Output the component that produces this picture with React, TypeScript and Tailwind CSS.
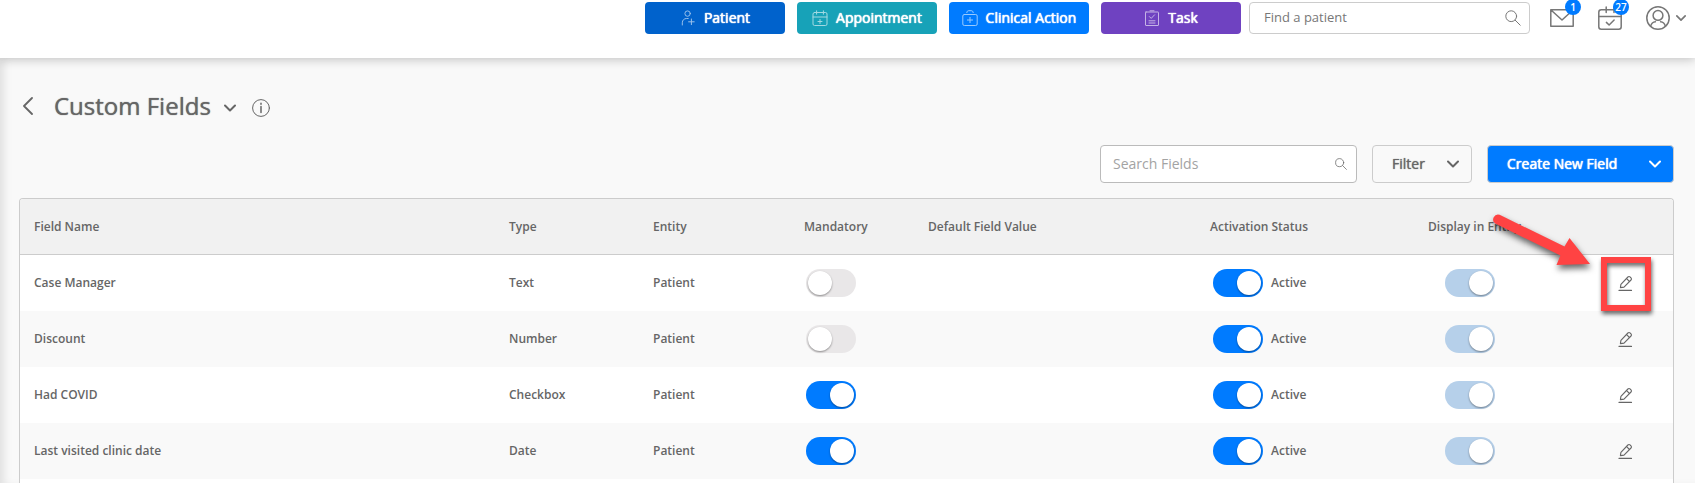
import { useState } from "react";
import type { ReactNode } from "react";

type Field = {
  name: string;
  type: string;
  entity: string;
  mandatory: boolean;
};

const fields: Field[] = [
  { name: "Case Manager", type: "Text", entity: "Patient", mandatory: false },
  { name: "Discount", type: "Number", entity: "Patient", mandatory: false },
  { name: "Had COVID", type: "Checkbox", entity: "Patient", mandatory: true },
  {
    name: "Last visited clinic date",
    type: "Date",
    entity: "Patient",
    mandatory: true,
  },
];

type IconProps = {
  size?: number;
  stroke?: number;
  className?: string;
  box?: number;
  children?: ReactNode;
};

const Icon = ({
  size = 16,
  stroke = 1,
  box = 16,
  className = "",
  children,
}: IconProps) => (
  <svg
    width={size}
    height={size}
    viewBox={`0 0 ${box} ${box}`}
    fill="none"
    stroke="currentColor"
    strokeWidth={stroke}
    strokeLinecap="round"
    strokeLinejoin="round"
    aria-hidden="true"
    className={`shrink-0 ${className}`}
  >
    {children}
  </svg>
);

const ChevronDown = ({ stroke = 2, size = 12 }: IconProps) => (
  <Icon size={size} box={12} stroke={stroke}>
    <path d="M1 3.5l5 5 5-5" />
  </Icon>
);

const SearchIcon = ({ size = 16, stroke = 1 }: IconProps) => (
  <Icon size={size} stroke={stroke}>
    <circle cx="6.2" cy="6.2" r="5.4" />
    <path d="M10.2 10.2l5 5" />
  </Icon>
);

const PencilIcon = () => (
  <Icon size={16} stroke={1.1}>
    <path d="M2.4 12.6l.5-3.2 7-7.4a1.5 1.5 0 0 1 2.2 0l.9.9a1.5 1.5 0 0 1 0 2.1l-7 7.1-3.6.5z" />
    <path d="M8.6 3.6l2.9 2.9" />
    <path d="M1 15.4h12.5" />
  </Icon>
);

const actions = [
  {
    label: "Patient",
    color: "bg-[#0062cc]",
    icon: (
      <>
        <circle cx="7.6" cy="3.6" r="2.7" />
        <path d="M2.3 15v-2.2c0-2.6 1.8-4.3 4.3-4.3h1.6M11.4 9v5.6M8.6 11.8h5.6" />
      </>
    ),
  },
  {
    label: "Appointment",
    color: "bg-[#17a2b8]",
    icon: (
      <>
        <rect x="1" y="2.5" width="14" height="13" rx="1.5" />
        <path d="M1 7h14M4.6.8v3.4M11.4.8v3.4M8 9.5v4M6 11.5h4" />
      </>
    ),
  },
  {
    label: "Clinical Action",
    color: "bg-[#007bff]",
    icon: (
      <>
        <rect x=".8" y="4.5" width="14.4" height="11" rx="1.5" />
        <path d="M4.8 2.6c0-1.2.8-1.9 2-1.9h2.4c1.2 0 2 .7 2 1.9M8 7.4v5.2M5.4 10h5.2" />
      </>
    ),
  },
  {
    label: "Task",
    color: "bg-[#6f42c1]",
    icon: (
      <>
        <rect x="1.5" y="2" width="13" height="13.5" rx=".5" />
        <path d="M6 .8h4M5.4 6.6l1.8 1.8 3.4-3.6M5 10.8h6M5 13h6" />
      </>
    ),
  },
];

const Badge = ({ children }: { children: ReactNode }) => (
  <span className="absolute -top-[7px] left-[15px] flex h-4 w-4 items-center justify-center rounded-full bg-[#007bff] text-[10px] font-semibold text-white">
    {children}
  </span>
);

const TopBar = () => (
  <header className="relative z-10 flex h-[58px] items-start justify-end bg-white pt-0.5 pr-[9px] shadow-[0_2px_10px_rgba(0,0,0,0.2)]">
    <div className="flex gap-3">
      {actions.map((a) => (
        <button
          key={a.label}
          type="button"
          className={`flex h-8 w-[140px] items-center justify-center gap-2 rounded text-sm text-white text-shadow-[0_0_1px_currentColor,0_0_1px_currentColor] ${a.color}`}
        >
          <Icon className="opacity-60">{a.icon}</Icon>
          {a.label}
        </button>
      ))}
    </div>
    <label className="ml-2 flex h-8 w-[281px] items-center rounded border border-[#ccc] pr-2 pl-3.5 text-[#777]">
      <input
        type="text"
        aria-label="Find a patient"
        placeholder="Find a patient"
        className="min-w-0 flex-1 text-[13px] outline-none placeholder:text-[#777]"
      />
      <SearchIcon />
    </label>
    <button
      type="button"
      aria-label="Messages"
      className="relative mt-1 ml-5 text-[#777]"
    >
      <Icon size={24} box={24} stroke={1.5}>
        <path d="M.8 3.8h22.4v16.4H.8zM1 4l11 10L23 4" />
      </Icon>
      <Badge>1</Badge>
    </button>
    <button
      type="button"
      aria-label="Calendar"
      className="relative mt-1 ml-6 text-[#777]"
    >
      <Icon size={24} box={24} stroke={1.5}>
        <rect x=".8" y="3.8" width="22.4" height="19.4" rx="2.5" />
        <path d="M1 10.5h22M8.2 1v5.4M16 1v5.4M8.4 16.4l2.7 2.6 5-5" />
      </Icon>
      <Badge>27</Badge>
    </button>
    <button
      type="button"
      aria-label="Account"
      className="mt-1 ml-6 flex items-center gap-1.5 text-[#777]"
    >
      <Icon size={24} box={24} stroke={1.5}>
        <circle cx="12" cy="12" r="11.2" />
        <circle cx="12" cy="9.4" r="4.9" />
        <path d="M4.6 20.2c.8-2.8 2.8-4.2 4.8-4.4M19.4 20.2c-.8-2.8-2.8-4.2-4.8-4.4" />
      </Icon>
      <ChevronDown stroke={2} size={10} />
    </button>
  </header>
);

type ToggleProps = {
  label: string;
  initial: boolean;
  disabled?: boolean;
};

const Toggle = ({ label, initial, disabled }: ToggleProps) => {
  const [on, setOn] = useState(initial);
  return (
    <input
      type="checkbox"
      role="switch"
      aria-label={label}
      checked={on}
      disabled={disabled}
      onChange={() => setOn(!on)}
      className="block h-7 w-[50px] shrink-0 appearance-none rounded-full bg-[#e9e7e8] p-0.5 before:block before:h-6 before:w-6 before:rounded-full before:bg-white before:shadow-[0_1px_2px_rgba(0,0,0,0.4)] checked:bg-[#007bff] checked:before:translate-x-[22px] disabled:checked:bg-[#b6d0ea]"
    />
  );
};

// red frame and arrow pointing at the edit button
const Callout = () => (
  <>
    <span className="pointer-events-none absolute top-0.5 left-[23px] h-[54px] w-[50px] border-6 border-[#ff4343] drop-shadow-[1px_3px_2px_rgba(0,0,0,0.6)]" />
    <svg
      width="120"
      height="80"
      viewBox="0 0 120 80"
      aria-hidden="true"
      className="pointer-events-none absolute -top-[50px] -left-[93px] drop-shadow-[1px_4px_3px_rgba(0,0,0,0.6)]"
    >
      <path
        d="M14.6 9.8 L79.5 41.6 L84.5 33 L105 59 L71.5 60 L75.4 50.6 L10.2 18.6 A5 5 0 0 1 14.6 9.8Z"
        fill="#ff4343"
      />
    </svg>
  </>
);

const FieldsTable = () => (
  <div className="mt-[15px] flex-1 overflow-hidden rounded-t border border-b-0 border-[#ccc] bg-white">
    <table className="w-full table-fixed border-separate border-spacing-0 text-left text-xs font-semibold">
      <colgroup>
        <col />
        <col className="w-36" />
        <col className="w-[151px]" />
        <col className="w-[124px]" />
        <col className="w-[282px]" />
        <col className="w-[218px]" />
        <col className="w-[164px]" />
        <col className="w-[95px]" />
      </colgroup>
      <thead>
        <tr className="bg-[#f1f1f1] [&>th]:h-14 [&>th]:border-b [&>th]:border-[#ccc] [&>th]:px-3.5 [&>th]:font-semibold">
          <th>Field Name</th>
          <th>Type</th>
          <th>Entity</th>
          <th>Mandatory</th>
          <th>Default Field Value</th>
          <th>Activation Status</th>
          <th>Display in Entity</th>
          <th aria-label="Edit" />
        </tr>
      </thead>
      <tbody>
        {fields.map((f, i) => (
          <tr
            key={f.name}
            className="even:bg-[#f9f9f9] [&>td]:h-14 [&>td]:px-3.5"
          >
            <td>{f.name}</td>
            <td>{f.type}</td>
            <td>{f.entity}</td>
            <td>
              <div className="pl-0.5">
                <Toggle label={`${f.name} mandatory`} initial={f.mandatory} />
              </div>
            </td>
            <td />
            <td>
              <div className="flex items-center gap-2 pl-[3px]">
                <Toggle label={`${f.name} active`} initial />
                Active
              </div>
            </td>
            <td>
              <div className="pl-[17px]">
                <Toggle label={`${f.name} displayed`} initial disabled />
              </div>
            </td>
            <td className="relative">
              <button
                type="button"
                aria-label={`Edit ${f.name}`}
                className="mx-auto block"
              >
                <PencilIcon />
              </button>
              {i === 0 && <Callout />}
            </td>
          </tr>
        ))}
      </tbody>
    </table>
  </div>
);

const App = () => {
  return (
    <div className="flex h-screen flex-col overflow-hidden bg-[#f9f9f9] font-['Open_Sans','Noto_Sans',sans-serif] text-[#666]">
      <TopBar />
      <main className="flex flex-1 flex-col pr-[21px] pl-[19px] shadow-[inset_8px_0_8px_-4px_rgba(0,0,0,0.1)]">
        <div className="flex h-[87px] items-center pt-2">
          <button type="button" aria-label="Back">
            <Icon size={18} box={18} stroke={1.8}>
              <path d="M13 1L5 9l8 8" />
            </Icon>
          </button>
          <h1 className="ml-[17px] text-2xl text-shadow-[0_0_1px_currentColor]">
            Custom Fields
          </h1>
          <button
            type="button"
            aria-label="Switch page"
            className="mt-1 ml-[13px]"
          >
            <ChevronDown stroke={2} />
          </button>
          <button type="button" aria-label="Information" className="mt-1 ml-4">
            <Icon size={18} box={18}>
              <circle cx="9" cy="9" r="8.4" />
              <path d="M9 7.6v6M9 4.2v1" strokeWidth="1.5" />
            </Icon>
          </button>
        </div>
        <div className="flex justify-end gap-[15px]">
          <label className="flex h-[38px] w-[257px] items-center rounded border border-[#bbb] bg-white pr-[9px] pl-3">
            <input
              type="text"
              aria-label="Search Fields"
              placeholder="Search Fields"
              className="min-w-0 flex-1 text-sm outline-none placeholder:text-[#a3a3a3]"
            />
            <SearchIcon size={12} />
          </label>
          <button
            type="button"
            className="flex h-[38px] w-[100px] items-center justify-between rounded border border-[#ccc] pr-3 pl-[19px] text-sm text-shadow-[0_0_1px_currentColor]"
          >
            Filter
            <ChevronDown />
          </button>
          <button
            type="button"
            className="flex h-[38px] w-[187px] items-center justify-between rounded border border-[#ccc] bg-[#007bff] pr-3 pl-[19px] text-sm text-white text-shadow-[0_0_1px_currentColor,0_0_1px_currentColor]"
          >
            Create New Field
            <ChevronDown />
          </button>
        </div>
        <FieldsTable />
      </main>
    </div>
  );
};

export default App;
